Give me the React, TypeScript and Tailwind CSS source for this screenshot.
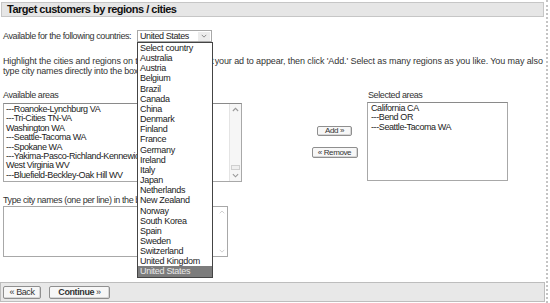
const countries = [
  "Select country",
  "Australia",
  "Austria",
  "Belgium",
  "Brazil",
  "Canada",
  "China",
  "Denmark",
  "Finland",
  "France",
  "Germany",
  "Ireland",
  "Italy",
  "Japan",
  "Netherlands",
  "New Zealand",
  "Norway",
  "South Korea",
  "Spain",
  "Sweden",
  "Switzerland",
  "United Kingdom",
  "United States",
];

const availableAreas = [
  "---Roanoke-Lynchburg VA",
  "---Tri-Cities TN-VA",
  "Washington WA",
  "---Seattle-Tacoma WA",
  "---Spokane WA",
  "---Yakima-Pasco-Richland-Kennewick WA",
  "West Virginia WV",
  "---Bluefield-Beckley-Oak Hill WV",
];

const selectedAreas = ["California CA", "---Bend OR", "---Seattle-Tacoma WA"];

function Chevron({ up, className }: { up?: boolean; className?: string }) {
  return (
    <svg viewBox="0 0 8 5" className={className} aria-hidden="true">
      <path
        d={up ? "M1 4.2 4 1.2 7 4.2" : "M1 1 4 4 7 1"}
        fill="none"
        stroke="currentColor"
        strokeWidth="1.3"
      />
    </svg>
  );
}

function ScrollBar({ thumb }: { thumb?: boolean }) {
  return (
    <div className="flex w-[12px] flex-col items-center justify-between border-l border-[#e4e4e4] bg-[#f6f6f6] py-[3px] text-[#9a9a9a]">
      <Chevron up className="h-[5px] w-[7px]" />
      <div className="flex-1" />
      {thumb && (
        <div className="mb-[3px] flex h-[5px] w-[9px] flex-col justify-between border border-[#cfcfcf] bg-[#efefef]" />
      )}
      <Chevron className="h-[5px] w-[7px]" />
    </div>
  );
}

function SmallButton({ children, className }: { children: React.ReactNode; className?: string }) {
  return (
    <button
      className={`flex items-center justify-center rounded-[2px] border border-[#8f8f8f] bg-[#f7f7f7] text-[8px] leading-none text-[#333] shadow-[inset_-1px_-1px_0_#d6d6d6] ${className ?? ""}`}
    >
      {children}
    </button>
  );
}

export default function App() {
  return (
    <div
      className="relative h-[303px] w-[550px] overflow-hidden bg-white text-[9px] tracking-[-0.4px] text-[#333]"
      style={{ fontFamily: '"Liberation Sans", Arial, sans-serif' }}
    >
      <div className="flex h-full w-[548px] flex-col border-r-2 border-dotted border-[#c4c4c4]">
        <div className="ml-[1px] mt-[2px] flex h-[15px] w-[543px] items-center border border-[#c6c6c6] bg-[#e6e6e6] pl-[5px]">
          <h1 className="text-[11px] font-bold tracking-[-0.5px] text-[#111]">
            Target customers by regions / cities
          </h1>
        </div>

        <div className="mt-[13px] flex h-[12px] items-center">
          <span className="w-[137px] pl-[3px] leading-[12px]">Available for the following countries:</span>
          <div className="flex h-[12px] w-[75px] items-center justify-between border border-[#a8a8a8] bg-white pl-[2px] text-[9px] leading-none text-[#222]">
            <span>United States</span>
            <span className="mr-[1px] flex h-[9px] w-[12px] items-center justify-center bg-[#ececec] text-[#888]">
              <Chevron className="h-[4px] w-[6px]" />
            </span>
          </div>
        </div>

        <p className="mt-[14px] whitespace-nowrap pl-[3px] leading-[10px] tracking-[-0.1px]">
          <span className="tracking-[-0.15px]">Highlight the cities and regions on the </span>
          <span className="tracking-[-0.75px]">left where you want </span>
          your ad to appear, then click 'Add.' Select as many regions as you like. You may also
          <br />
          <span className="tracking-[-0.2px]">type city names directly into the box below.</span>
        </p>

        <div className="mt-[14px] flex">
          <div className="w-[242px] pl-[3px]">
            <div className="h-[10px] leading-[10px]">Available areas</div>
            <div className="mt-[3px] flex h-[79px] border border-[#a8a8a8] border-t-[#8a8a8a] bg-white">
              <ul className="flex-1 overflow-hidden whitespace-nowrap pl-[2px] pt-[1px] leading-[9.4px] text-[#222]">
                {availableAreas.map((a) => (
                  <li key={a}>{a}</li>
                ))}
              </ul>
              <ScrollBar thumb />
            </div>
          </div>

          <div className="flex w-[125px] flex-col items-center pl-[60px] pt-[36px]">
            <SmallButton className="h-[10px] w-[35px]">Add »</SmallButton>
            <SmallButton className="mt-[11px] h-[11px] w-[46px]">« Remove</SmallButton>
          </div>

          <div className="w-[141px]">
            <div className="h-[10px] pl-[1px] leading-[10px]">Selected areas</div>
            <ul className="mt-[2px] h-[79px] border border-[#a8a8a8] border-t-[#8a8a8a] bg-white pl-[3px] pt-[1px] leading-[9.4px] text-[#222]">
              {selectedAreas.map((a) => (
                <li key={a}>{a}</li>
              ))}
            </ul>
          </div>
        </div>

        <div className="mt-[13px] h-[10px] pl-[3px] leading-[10px]">
          Type city names (one per line) in the box below.
        </div>
        <div className="ml-[3px] mt-[1px] flex h-[51px] w-[225px] border border-[#a8a8a8] bg-white">
          <div className="flex-1" />
          <div className="flex w-[11px] flex-col items-center justify-between py-[3px] text-[#cfcfcf]">
            <Chevron up className="h-[4px] w-[6px]" />
            <Chevron className="h-[4px] w-[6px]" />
          </div>
        </div>

        <div className="mb-[1px] mt-auto flex h-[20px] w-[545px] items-center gap-[8px] border border-[#bdbdbd] bg-[#e8e8e8] pl-[2px]">
          <SmallButton className="h-[13px] w-[38px] text-[9px]">« Back</SmallButton>
          <SmallButton className="h-[13px] w-[61px] text-[9px]">
            <span className="font-bold">Continue</span>
            <span className="ml-[2px]">»</span>
          </SmallButton>
        </div>
      </div>

      <ul className="absolute left-[137px] top-[42px] z-10 w-[76px] border border-[#444] bg-white text-[9px] leading-[10.15px] tracking-[-0.3px] text-[#222]">
        {countries.map((c) => (
          <li
            key={c}
            className={c === "United States" ? "bg-[#7c7c7c] pl-[2px] text-[#e8e8e8]" : "pl-[2px]"}
          >
            {c}
          </li>
        ))}
      </ul>
    </div>
  );
}
